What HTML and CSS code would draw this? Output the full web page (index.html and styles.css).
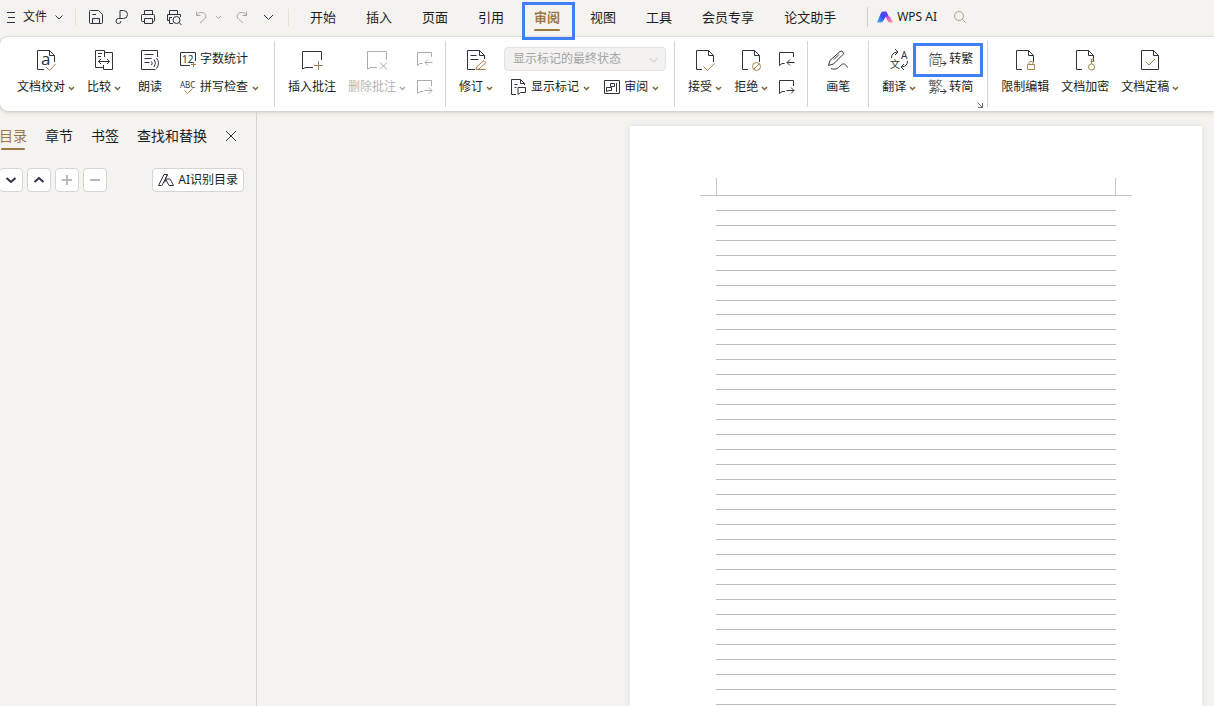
FILE: index.html
```
<!DOCTYPE html>
<html lang="zh-CN">
<head>
<meta charset="utf-8">
<title>WPS 文字</title>
<link rel="stylesheet" href="styles.css">
</head>
<body>
<svg class="defs" aria-hidden="true">
  <symbol id="chev" viewBox="0 0 7 5"><path d="M1 1l2.5 2.5L6 1"/></symbol>
  <symbol id="doc" viewBox="0 0 24 28"><path d="M9 24.5H3.5v-19h12l5 5V17M15.5 5.5v5h5"/></symbol>
  <symbol id="prev" viewBox="0 0 16 16"><path d="M14.5 6V1.500H.5v13l2.500-2H5.500M15.500 11.500H8M11 8.500l-3 3 3 3"/></symbol>
  <symbol id="next" viewBox="0 0 16 16"><path d="M14.5 7V1.500H.5v13l2.500-2H6M7.500 11.500h7.500M12 8.500l3 3-3 3"/></symbol>
</svg>
<div class="app">
  <header class="topbar">
    <button class="file"><svg width="9" height="12" viewBox="0 0 9 12"><path d="M0 1.500h8M1 6.500h7M0 11.500h8"/></svg><span>文件</span><svg class="file-chev" width="8" height="5" viewBox="0 0 8 5"><path d="M.5.5L4 4 7.500.5"/></svg></button>
    <span class="bar"></span>
    <div class="quick">
      <button aria-label="保存"><svg width="16" height="16" viewBox="0 0 16 16"><path d="M2.500 1.500h8l4 4v8q0 1-1 1h-11q-1 0-1-1v-11q0-1 1-1zM4.500 14v-4.500h7V14M4.500 5.500h3.500"/></svg></button>
      <button aria-label="输出为PDF"><svg width="16" height="16" viewBox="0 0 16 16"><path d="M6 10V1.500h3.500a4 4 0 0 1 0 8H4.500a2.500 2.500 0 1 0 2.500 2.500"/></svg></button>
      <button aria-label="打印"><svg width="16" height="16" viewBox="0 0 16 16"><path d="M4.500 5V1.500h8V5M4 12.500H2.500q-1 0-1-1v-5q0-1 1-1h11q1 0 1 1v5q0 1-1 1H13M4.500 9.500h8v5h-8z"/></svg></button>
      <button aria-label="打印预览"><svg width="16" height="16" viewBox="0 0 16 16"><path d="M3.500 5V1.500h8V5M3 11.500H1.500v-6h13V8M6 8.500H3.500v6H7"/><circle cx="10.500" cy="11" r="3.500"/><path d="M13 13.500l2.500 2.500"/></svg></button>
      <button class="undo faint" aria-label="撤销"><svg width="14" height="14" viewBox="0 0 14 14"><path d="M2.500 1.500v4h4M2.500 5.500C4 3 6 2 8 2.500c4 .5 5 4 2.500 6.500L6 13"/></svg></button>
      <button class="mini faint" aria-label="撤销列表"><svg width="7" height="5"><use href="#chev"/></svg></button>
      <button class="redo faint" aria-label="重做"><svg width="14" height="14" viewBox="0 0 14 14"><path d="M11.500 1.500v4h-4M11.500 5.500C10 3 8 2 6 2.500c-4 .5-5 4-2.500 6.500L8 13"/></svg></button>
      <button aria-label="更多"><svg width="11" height="7" viewBox="0 0 11 7"><path d="M1 1l4.500 4.500L10 1"/></svg></button>
    </div>
    <span class="bar"></span>
    <nav class="tabs">
      <button>开始</button><button>插入</button><button>页面</button><button>引用</button><button class="current">审阅</button><button>视图</button><button>工具</button><button>会员专享</button><button>论文助手</button>
    </nav>
    <span class="bar dark"></span>
    <button class="ai"><svg width="16" height="12" viewBox="0 0 16 12"><defs><linearGradient id="blue" x1="0" y1="1" x2="1" y2="0"><stop offset="0" stop-color="#35b8ff"/><stop offset=".5" stop-color="#3a4bf5"/><stop offset="1" stop-color="#7b3cff"/></linearGradient><linearGradient id="pink" x1="0" y1="0" x2="1" y2="1"><stop offset="0" stop-color="#e03cf0"/><stop offset="1" stop-color="#ff9a80"/></linearGradient></defs><path class="logo-a" d="M0 11.500L4 2Q4.500.5 6 .5h3.500L12 6H8.500L6.500 9.500q-1 2-3 2z"/><path class="logo-b" d="M8.500 5.500H12q1 0 1.500 1l2.500 5h-3q-1.500 0-2-1z"/></svg><span>WPS AI</span></button>
    <button class="search" aria-label="搜索"><svg width="14" height="14" viewBox="0 0 14 14"><circle cx="6" cy="6" r="4.500"/><path d="M9.500 9.500L13 13"/></svg></button>
  </header>

  <section class="ribbon">
    <div class="group g-proof">
      <button class="big"><svg width="24" height="28" viewBox="0 0 24 28"><path d="M10 24.500H3.500v-19h12l5 5V17M15.500 5.500v5h5"/><text class="letter-a" x="7" y="20">a</text><path class="gold" d="M12 22l3.500 3.500 6-6.500"/></svg><span class="label">文档校对<svg class="chev" width="7" height="5"><use href="#chev"/></svg></span></button>
      <button class="big"><svg width="24" height="28" viewBox="0 0 24 28"><path d="M12.500 12V5.500h-9v17h8v2h9v-17h-8M11.500 20v4M6 8.500h4M6 11.500h3M6.500 16.500h11M9 14l-2.500 2.500L9 19M15 14l2.500 2.500L15 19"/></svg><span class="label">比较<svg class="chev" width="7" height="5"><use href="#chev"/></svg></span></button>
      <button class="big wide"><svg width="24" height="28" viewBox="0 0 24 28"><path d="M19.500 12V5.500h-16v19h14M6.500 9.500h9M6.500 13.500h7M6.500 17.500h5M13.500 16.500q1.500 1.500 0 3.500M16 14.500q3 3.500 0 7.500M18.500 13q4 5 0 10.500"/></svg><span class="label">朗读</span></button>
      <div class="rows wide">
        <button class="row"><svg width="16" height="16" viewBox="0 0 16 16"><path d="M15.500 10V1.500H.5v13H10"/><text class="num" x="2" y="12">12</text><path class="gold" d="M13.500 11v5M11 13.500h5"/></svg>字数统计</button>
        <button class="row"><svg width="16" height="16" viewBox="0 0 16 16"><text class="abc" x="0" y="9">ABC</text><path class="gold" d="M4.500 11.500l3 3 5-5"/></svg>拼写检查<svg class="chev" width="7" height="5"><use href="#chev"/></svg></button>
      </div>
    </div>
    <div class="group g-comment">
      <button class="big"><svg width="24" height="28" viewBox="0 0 24 28"><path d="M21.500 15V6.500h-19V24l3-1.500H13"/><path class="gold" d="M18.500 16v9M14 20.500h9"/></svg><span class="label">插入批注</span></button>
      <button class="big off" disabled><svg width="24" height="28" viewBox="0 0 24 28"><path d="M21.500 15V6.500h-19V24l3-1.500H12M15 17.500l7 7M22 17.500l-7 7"/></svg><span class="label">删除批注<svg class="chev" width="7" height="5"><use href="#chev"/></svg></span></button>
      <div class="rows tight">
        <button class="row off" disabled aria-label="上一条批注"><svg width="16" height="16"><use href="#prev"/></svg></button>
        <button class="row off" disabled aria-label="下一条批注"><svg width="16" height="16"><use href="#next"/></svg></button>
      </div>
    </div>
    <div class="group g-track">
      <button class="big"><svg width="24" height="28" viewBox="0 0 24 28"><path d="M11 24.500H3.500v-19h12l5 5V14M15.500 5.500v5h5M6.500 10.500h6M6.500 14.500h8"/><path class="gold" d="M12 24.500l1-3 7-6 2 2-7 6.500zM12 24.500h10"/></svg><span class="label">修订<svg class="chev" width="7" height="5"><use href="#chev"/></svg></span></button>
      <div class="rows">
        <div class="picker"><select disabled aria-label="显示状态"><option>显示标记的最终状态</option></select><svg width="9" height="6" viewBox="0 0 9 6"><path d="M.5 1l4 4 4-4"/></svg></div>
        <div class="pair">
          <button class="row"><svg width="16" height="16" viewBox="0 0 16 16"><path d="M5 15.500H.5V.5h9l4 4V6M9.500.5v4h4M3.500 5.500h3M3.500 8.500h2M7 8.500h7.500v5H9.500l-2.500 2z"/></svg>显示标记<svg class="chev" width="7" height="5"><use href="#chev"/></svg></button>
          <button class="row"><svg width="16" height="16" viewBox="0 0 16 16"><path d="M.5 1.500h15v13H.5zM12.500 4v9M6.500 4.500h4v3h-4zM2.500 8.500h5v3H5L2.500 12.500z"/></svg>审阅<svg class="chev" width="7" height="5"><use href="#chev"/></svg></button>
        </div>
      </div>
    </div>
    <div class="group g-comment">
      <button class="big"><svg width="24" height="28" viewBox="0 0 24 28"><use href="#doc" width="24" height="28"/><path class="gold" d="M10.500 21.500l4 4 7-7"/></svg><span class="label">接受<svg class="chev" width="7" height="5"><use href="#chev"/></svg></span></button>
      <button class="big"><svg width="24" height="28" viewBox="0 0 24 28"><use href="#doc" width="24" height="28"/><g class="gold"><circle cx="17.500" cy="21.500" r="4"/><path d="M14.500 24.500l6-6"/></g></svg><span class="label">拒绝<svg class="chev" width="7" height="5"><use href="#chev"/></svg></span></button>
      <div class="rows tight">
        <button class="row" aria-label="上一条修订"><svg width="16" height="16"><use href="#prev"/></svg></button>
        <button class="row" aria-label="下一条修订"><svg width="16" height="16"><use href="#next"/></svg></button>
      </div>
    </div>
    <div class="group g-pen">
      <button class="big"><svg width="24" height="28" viewBox="0 0 24 28"><path d="M2.500 20.500l1.500-5L14 6.500q2-1 3 .5t0 2.500L7.500 19zM13 9.500l-5 5M5 23.500c4 1.500 7 0 9-2.500s5-3.500 7.500 1.500"/></svg><span class="label">画笔</span></button>
    </div>
    <div class="group g-lang">
      <button class="big"><svg width="24" height="28" viewBox="0 0 24 28"><text class="glyph" x="14" y="14">A</text><text class="glyph cjk" x="3" y="23">文</text><path d="M4.500 13q0-5.500 6-6M8 4l3 3-3 3M20.500 16q0 5.500-6 6M17 19l-3 3 3 3"/></svg><span class="label">翻译<svg class="chev" width="7" height="5"><use href="#chev"/></svg></span></button>
      <div class="rows">
        <button class="row marked"><svg width="16" height="16" viewBox="0 0 16 16"><text class="han" x="-1" y="14">简</text><path class="clear" d="M12 13.500h5"/><path d="M12 12.500h5M14.500 10l2.500 2.500-2.500 2.500"/></svg>转繁</button>
        <button class="row"><svg width="16" height="16" viewBox="0 0 16 16"><text class="han" x="-1" y="13">繁</text><path class="clear" d="M10 13.500h7"/><path d="M11 12.500h6M14.500 10l2.500 2.500-2.500 2.500"/></svg>转简</button>
      </div>
      <button class="launcher" aria-label="更多设置"><svg width="6" height="6" viewBox="0 0 6 6"><path d="M.5.5l5 5M5.500 1v4.500H1"/></svg></button>
    </div>
    <div class="group g-protect">
      <button class="big"><svg width="24" height="28" viewBox="0 0 24 28"><use href="#doc" width="24" height="28"/><path class="gold" d="M14.500 19.500h7v5h-7zM16 19v-1.500q2-3 4 0V19"/></svg><span class="label">限制编辑</span></button>
      <button class="big"><svg width="24" height="28" viewBox="0 0 24 28"><use href="#doc" width="24" height="28"/><g class="gold"><circle cx="18.500" cy="22" r="3"/><path d="M18.500 19v-5h2.500M18.500 16.500H21"/></g></svg><span class="label">文档加密</span></button>
      <button class="big"><svg width="24" height="28" viewBox="0 0 24 28"><path d="M3.500 24.500v-19h12l5 5v14zM15.500 5.500v5h5"/><path class="gold" d="M7.500 16.500l3.500 3.500 6-6"/></svg><span class="label">文档定稿<svg class="chev" width="7" height="5"><use href="#chev"/></svg></span></button>
    </div>
  </section>

  <main class="work">
    <aside class="side">
      <div class="side-tabs">
        <button class="current">目录</button><button>章节</button><button>书签</button><button>查找和替换</button>
        <button class="close" aria-label="关闭"><svg width="12" height="12" viewBox="0 0 12 12"><path d="M1 1l10 10M11 1L1 11"/></svg></button>
      </div>
      <div class="side-tools">
        <button class="tool" aria-label="展开"><svg width="12" height="12" viewBox="0 0 12 12"><path d="M1.500 4L6 8l4.500-4"/></svg></button>
        <button class="tool" aria-label="收起"><svg width="12" height="12" viewBox="0 0 12 12"><path d="M1.500 8L6 4l4.500 4"/></svg></button>
        <button class="tool pale" aria-label="增加"><svg width="12" height="12" viewBox="0 0 12 12"><path d="M6 1v10M1 6h10"/></svg></button>
        <button class="tool pale" aria-label="减少"><svg width="12" height="12" viewBox="0 0 12 12"><path d="M1 6h10"/></svg></button>
        <button class="detect"><svg width="16" height="12" viewBox="0 0 16 12"><path d="M3.500 11.500H.5L6 .5h3.500L4 11.500M9.500.5l-2 4.500 3.500 6.500h4.500L12 5H8.500l-2 3.500"/></svg>AI识别目录</button>
      </div>
    </aside>
    <div class="canvas">
      <article class="page">
        <div class="corners"><span></span><span></span></div>
        <div class="rules first"></div>
        <div class="rules rest"></div>
      </article>
    </div>
  </main>
</div>
</body>
</html>
```
FILE: styles.css
```
* { box-sizing: border-box; }
body {
  margin: 0;
  background: #f4f3ef;
  color: #1c1d22;
  font: 12px/16px "Noto Sans", "Noto Sans CJK SC", sans-serif;
}
button {
  margin: 0; padding: 0; border: 0; background: none;
  color: inherit; font: inherit; white-space: nowrap;
}
svg { display: block; flex: none; fill: none; stroke: #2f3342; overflow: visible; }
.defs { position: absolute; width: 0; height: 0; }
.app { display: flex; flex-direction: column; height: 100vh; overflow: hidden; }

.topbar { display: flex; align-items: center; height: 37px; padding: 0 7px 3px; flex: none; }
.file { display: flex; align-items: center; gap: 7px; width: 68px; }
.file-chev { margin-left: 1px; }
.bar { width: 1px; height: 17px; background: #e6dfd8; flex: none; }
.bar.dark { height: 20px; background: #cfcdca; margin-left: 31px; }
.quick { display: flex; align-items: center; padding: 0 7px; }
.quick button { display: flex; align-items: center; justify-content: center; width: 26px; height: 26px; }
.quick .undo { width: 28px; }
.quick .mini { width: 6px; }
.quick .redo { margin-left: 8px; }
.faint svg { stroke: #a9a9a7; }
.tabs { display: flex; gap: 30px; padding-left: 21px; font-size: 13px; line-height: 20px; }
.tabs .current, .side-tabs .current { position: relative; color: #9b7845; font-weight: 700; }
.tabs .current::before, .side-tabs .current::before {
  content: ""; position: absolute; left: 0; right: 0; bottom: -4px;
  height: 2px; border-radius: 1px; background: #9b7845;
}
.tabs .current::after {
  content: ""; position: absolute; inset: -5px -15px -13px -12px;
  border: 3px solid #3f80f5; z-index: 3;
}
.topbar { position: relative; z-index: 2; }
.ai { display: flex; align-items: center; gap: 4px; margin-left: 9px; }
.ai svg { stroke: none; }
.logo-a { fill: url(#blue); }
.logo-b { fill: url(#pink); }
.search { margin-left: 16px; }
.search svg { stroke: #b0a08f; }

.ribbon {
  display: flex; flex: none; position: relative; z-index: 1; height: 74px;
  background: #fff; border-radius: 8px 0 0 8px;
  box-shadow: 0 0 2px #bbb9b4, 0 2px 4px #d9d7d2;
}
.group { display: flex; position: relative; gap: 12px; padding-top: 8px; }
.group:not(:last-child)::after {
  content: ""; position: absolute; right: -1px; top: 4px; bottom: 4px;
  width: 1px; background: #d5d4d2;
}
.g-proof { padding-left: 17px; padding-right: 15px; }
.g-proof .big.wide { margin-left: 5px; }
.g-proof .rows.wide { margin-left: 6px; }
.g-comment { padding-left: 14px; padding-right: 12px; }
.g-comment .tight { margin-left: -1px; }
.g-track { padding-left: 14px; padding-right: 8px; gap: 11px; }
.g-pen { padding-left: 19px; padding-right: 18px; }
.g-lang { padding-left: 14px; padding-right: 14px; gap: 13px; }
.g-protect { padding-left: 14px; }
.big { display: flex; flex-direction: column; align-items: center; height: 56px; }
.label, .row { display: flex; align-items: center; height: 28px; }
.row { gap: 4px; position: relative; }
.label .chev { margin-left: 3px; }
.chev { stroke: #7d6138; stroke-width: 1.5; margin-top: 2px; }
.gold { stroke: #a5834d; }
.off { color: #b5b5b5; }
.off svg { stroke: #ababab; }
.rows { display: flex; flex-direction: column; }
.picker { position: relative; height: 28px; padding: 2px 0; }
.picker select {
  display: block; width: 162px; height: 24px; padding: 0 8px; opacity: 1;
  appearance: none; border: 1px solid #e3e2e0; border-radius: 4px;
  background: #f3f2f0; color: #a3a3a3; font: inherit;
}
.picker svg { position: absolute; right: 8px; top: 12px; stroke: #c2c2c2; }
.pair { display: flex; gap: 14px; padding-left: 7px; }
.marked::after {
  content: ""; position: absolute; inset: -2px -10px -4px -16px;
  border: 3px solid #3f80f5;
}
.launcher { position: absolute; right: 4px; bottom: 3px; }
.launcher svg { stroke: #6d6d70; }
text { fill: #2f3342; stroke: none; }
.letter-a { font: 17px "Open Sans", sans-serif; }
.num { font: 10px "Noto Sans", sans-serif; }
.abc { font: 8px "Noto Sans", sans-serif; }
.glyph { font: 10px "Noto Sans", sans-serif; }
.cjk { font-family: "Noto Sans CJK SC", sans-serif; }
.han { font: 300 15px "Noto Sans CJK SC", sans-serif; }
.clear { stroke: #fff; stroke-width: 6; }

.work { display: flex; flex: 1; min-height: 0; }
.side { width: 257px; flex: none; border-right: 1px solid #d4d3d0; }
.side-tabs { display: flex; align-items: center; gap: 18px; padding-top: 15px; margin-left: -1px; font-size: 14px; line-height: 20px; }
.side-tabs .current { font-weight: 400; }
.side-tabs .current::before { left: 2px; right: 2px; }
.side-tools { display: flex; gap: 4px; margin: 22px 12px 0 -1px; }
.tool, .detect {
  display: flex; align-items: center; justify-content: center; height: 24px;
  background: #fff; border: 1px solid #d6d5d3; border-radius: 4px;
}
.tool { width: 24px; }
.tool svg { stroke-width: 2; }
.tool.pale svg { stroke: #b9b9b9; }
.detect { margin-left: auto; padding: 0 5px; gap: 4px; }
.canvas { flex: 1; display: flex; justify-content: flex-end; padding: 15px 12px 0; min-width: 0; }
.page {
  display: flex; flex-direction: column; width: 572px; padding: 52px 86px 0;
  background: #fff; box-shadow: 0 0 6px #dddcd5;
}
.corners { display: flex; justify-content: space-between; margin: 0 -16px; }
.corners span { width: 17px; height: 18px; border: 0 solid #c8c8c8; border-width: 0 1px 1px 0; }
.corners span:last-child { border-width: 0 0 1px 1px; }
.rules { background: repeating-linear-gradient(#bdbdbd 0 1px, transparent 1px 15px); }
.first { height: 119px; margin-top: -1px; flex: none; }
.rest { flex: 1; }
```
